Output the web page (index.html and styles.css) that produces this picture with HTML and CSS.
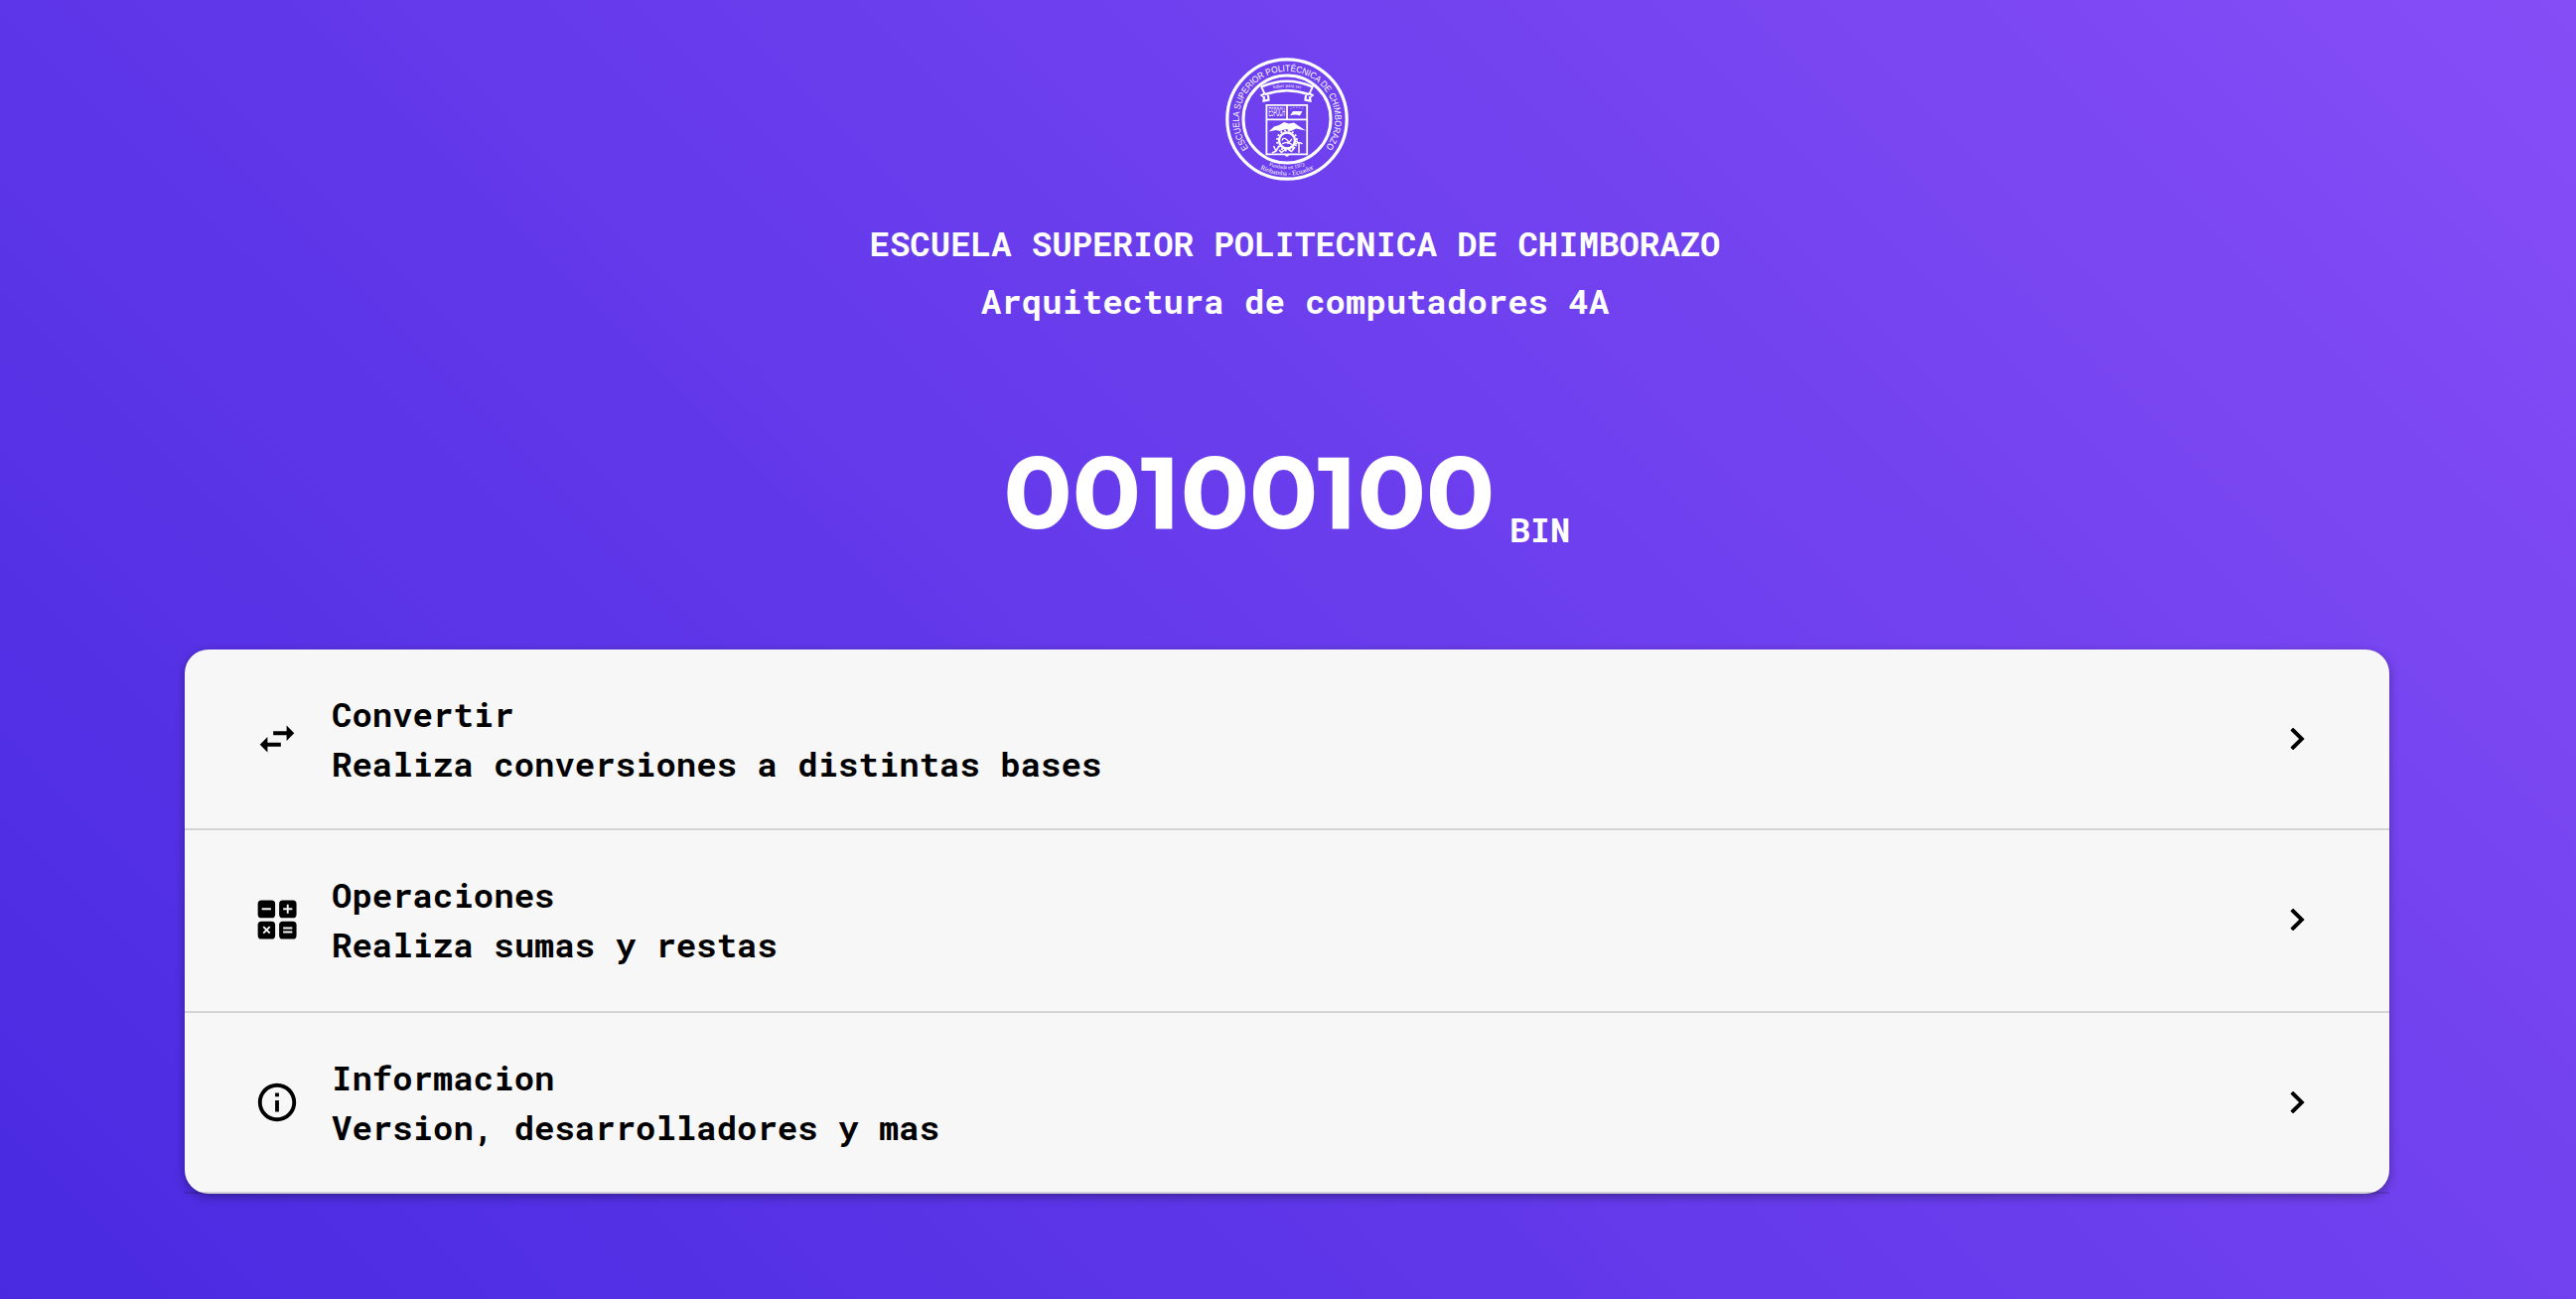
FILE: index.html
```html
<!DOCTYPE html>
<html lang="es">
<head>
<meta charset="utf-8">
<title>Arquitectura de computadores 4A</title>
<link rel="stylesheet" href="styles.css">
</head>
<body>
<main class="page">
  <svg class="logo" viewBox="-62 -62 124 124" fill="none" stroke="#fff">
    <defs>
      <path id="ring-top" d="M-38.6 29.1A48.3 48.3 0 1 1 38.6 29.1"/>
      <path id="ring-founded" d="M-30 40.2A50.2 50.2 0 0 0 30 40.2"/>
      <path id="ring-city" d="M-34 45.4A56.7 56.7 0 0 0 34 45.4"/>
      <path id="motto" d="M-19 -29.4Q0 -35 19 -29.4"/>
    </defs>
    <circle r="60.2" stroke-width="3.2"/>
    <circle r="44" stroke-width="3"/>
    <g fill="#fff" stroke="none">
      <text class="logo-ring"><textPath href="#ring-top" textLength="213" lengthAdjust="spacingAndGlyphs">ESCUELA SUPERIOR POLITÉCNICA DE CHIMBORAZO</textPath></text>
      <text class="logo-founded"><textPath href="#ring-founded" startOffset="50%">Fundada en 1972</textPath></text>
      <text class="logo-city"><textPath href="#ring-city" startOffset="50%">Riobamba - Ecuador</textPath></text>
      <text class="logo-motto"><textPath href="#motto" startOffset="50%">Saber para ser</textPath></text>
      <text class="logo-code" x="-18.5" y="-3" textLength="16.5" lengthAdjust="spacingAndGlyphs">ESPOCH</text>
    </g>
    <path d="M-26 -32.5Q0 -44 26 -32.5M-22 -25Q0 -32.5 22 -25" stroke-width="2.4"/>
    <path d="M-26 -33L-22.5 -25.5M26 -33L22.5 -25.5" stroke-width="1.8"/>
    <path d="M-22 -26L-25.5 -24L-23 -22L-23.5 -18.5L-18.5 -19.5L-19 -24M22 -26L25.5 -24L23 -22L23.5 -18.5L18.5 -19.5L19 -24" stroke-width="2.2"/>
    <path d="M-20.6 -14.2H20.2V35.4H-20.6ZM-20.6 .4H20.2M0 -14.2V.4" stroke-width="1.8"/>
    <path d="M3 -3.5L6 -8H15.5L13 -3.5Q8 -5.5 3 -3.5ZM-18.5 12.5L-13 7.5L-8 6L-3 3L2 4.5L7 3.5L12 7L19 11.5L9 9.5L4 12L-1 10L-7 12L-11 11Z" fill="#fff" stroke="none"/>
    <path d="M3.5 -10.5Q9.5 -13 16.5 -10.5" stroke-width=".8" stroke-dasharray="1 2"/>
    <circle cy="21.5" r="8" stroke-width="2.4"/>
    <circle cy="21.5" r="10" stroke-width="2" stroke-dasharray="1.8 2.2"/>
    <path d="M-5 21.5Q-4 18 -1 20T1 24T5 20M-5 25Q0 22 5 25.5" stroke-width="1.2"/>
    <path d="M-13.5 27L-11 32L-8 27M-11 32L-15 34M-8 31L-5 34M12 24V34M8.5 25Q12 22 15.5 25M5 32L8 28M-5 33L0 29L5 33" stroke-width="1.5"/>
    <path d="M-3 35.8H3L0 38Z" fill="#fff" stroke="none"/>
  </svg>

  <header class="titles">
    <h1>ESCUELA SUPERIOR POLITECNICA DE CHIMBORAZO</h1>
    <h2>Arquitectura de computadores 4A</h2>
  </header>

  <div class="display">
    <span class="number">00100100</span>
    <span class="base">BIN</span>
  </div>

  <ul class="menu">
    <li class="item">
      <svg class="icon" viewBox="0 0 24 24"><path d="M6.99 11L3 15l3.99 4v-3H14v-2H6.99v-3zM21 9l-3.99-4v3H10v2h7.01v3L21 9z"/></svg>
      <div class="label"><span>Convertir</span><span>Realiza conversiones a distintas bases</span></div>
      <svg class="icon" viewBox="0 0 24 24"><path d="M10.2 6.2L9.8 6.2L8.7 7.3V7.7L13.1 12L8.7 16.3V16.7L9.8 17.8H10.2L16 12Z"/></svg>
    </li>
    <li class="item">
      <svg class="icon" viewBox="0 0 24 24">
        <rect x="1.9" y="1.8" width="9.1" height="9.3" rx="1.9"/><rect x="13.1" y="1.8" width="9.1" height="9.3" rx="1.9"/>
        <rect x="1.9" y="12.9" width="9.1" height="9.3" rx="1.9"/><rect x="13.1" y="12.9" width="9.1" height="9.3" rx="1.9"/>
        <path class="sign" d="M4 6.4H8.8M15.2 6.4H20M17.6 4V8.8M4.8 15.7L8.2 19.1M8.2 15.7L4.8 19.1M15.2 16.4H20M15.2 18.5H20"/>
      </svg>
      <div class="label"><span>Operaciones</span><span>Realiza sumas y restas</span></div>
      <svg class="icon" viewBox="0 0 24 24"><path d="M10.2 6.2L9.8 6.2L8.7 7.3V7.7L13.1 12L8.7 16.3V16.7L9.8 17.8H10.2L16 12Z"/></svg>
    </li>
    <li class="item">
      <svg class="icon" viewBox="0 0 24 24"><path d="M11 7h2v2h-2zm0 4h2v6h-2zm1-9C6.48 2 2 6.48 2 12s4.48 10 10 10 10-4.48 10-10S17.52 2 12 2zm0 18c-4.41 0-8-3.59-8-8s3.59-8 8-8 8 3.59 8 8-3.59 8-8 8z"/></svg>
      <div class="label"><span>Informacion</span><span>Version, desarrolladores y mas</span></div>
      <svg class="icon" viewBox="0 0 24 24"><path d="M10.2 6.2L9.8 6.2L8.7 7.3V7.7L13.1 12L8.7 16.3V16.7L9.8 17.8H10.2L16 12Z"/></svg>
    </li>
  </ul>
</main>
</body>
</html>
```
FILE: styles.css
```css
* {
  box-sizing: border-box;
  margin: 0;
  padding: 0;
}

body {
  min-height: 100vh;
  background: linear-gradient(45deg, #492ae1, #854df6);
  font: 700 34px/50px "Roboto Mono", "DejaVu Sans Mono", monospace;
  color: #fff;
}

.page {
  display: flex;
  flex-direction: column;
  align-items: center;
  width: 2220px;
  margin-left: 186px;
  padding-top: 58px;
}

.logo {
  width: 124px;
  height: 124px;
}

.logo-ring {
  font: 400 9.2px "Liberation Sans", Arial, sans-serif;
}

.logo-founded,
.logo-city,
.logo-motto {
  font: 400 5.4px "Liberation Serif", serif;
  text-anchor: middle;
}

.logo-city {
  font-size: 6.8px;
}

.logo-motto {
  font-size: 5px;
}

.logo-code {
  font: 400 12px "Liberation Sans", Arial, sans-serif;
}

.titles {
  margin: 34px 0 102px 16px;
  text-align: center;
}

.titles h1,
.titles h2 {
  font-size: 34px;
  line-height: 58px;
}

.display {
  display: flex;
  align-items: flex-end;
  gap: 15px;
  margin-bottom: 96px;
}

.number {
  font: 700 102px/124px Montserrat, Inter, sans-serif;
}

.menu {
  width: 100%;
  list-style: none;
  color: #000;
  background: #f7f7f7;
  border-radius: 24px;
  box-shadow: 0 3px 10px rgba(0, 0, 0, .35);
}

.item {
  display: flex;
  align-items: center;
  height: 182px;
  padding: 0 70px;
  border-bottom: 2px solid rgba(0, 0, 0, .14);
}

.item:nth-child(2) {
  height: 184px;
  padding-bottom: 2px;
}

.icon {
  flex: none;
  width: 46px;
  height: 46px;
}

.sign {
  fill: none;
  stroke: #f7f7f7;
  stroke-width: 1;
}

.label {
  display: flex;
  flex: 1;
  flex-direction: column;
  margin-left: 32px;
}
```
